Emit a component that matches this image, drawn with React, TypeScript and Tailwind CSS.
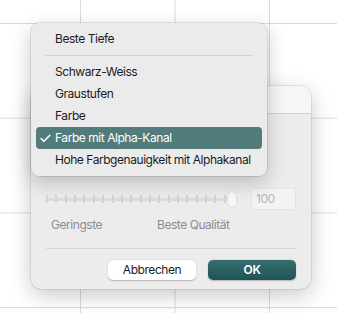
import { Check } from "lucide-react"

const items = [
  "Schwarz-Weiss",
  "Graustufen",
  "Farbe",
  "Farbe mit Alpha-Kanal",
  "Hohe Farbgenauigkeit mit Alphakanal",
]

const Slider = () => {
  const ticks = Array.from({ length: 20 })
  return (
    <div className="relative h-[14px] w-[190px]">
      <div className="absolute left-0 right-[6px] top-[6px] h-[3px] rounded-full bg-[#dcdcdc]" />
      <div className="absolute left-0 right-[10px] top-[3px] flex justify-between">
        {ticks.map((_, i) => (
          <div key={i} className="h-[8px] w-[2px] bg-[#d4d4d4]" />
        ))}
      </div>
      <div className="absolute right-0 top-0 h-[15px] w-[8px] rounded-full bg-[#f7f7f7] shadow-[0_0_0_0.5px_#cfcfcf]" />
    </div>
  )
}

const App = () => {
  return (
    <div
      className="relative h-[313px] w-[337px] overflow-hidden bg-white bg-[linear-gradient(to_right,#dadada_1px,transparent_1px),linear-gradient(to_bottom,#dadada_1px,transparent_1px)] bg-[size:94.5px_94.7px] bg-[position:80px_23px] text-[12px] tracking-[-0.45px] text-[#1c1c1c]"
      style={{ fontFamily: "Inter, 'Liberation Sans', sans-serif" }}
    >
      {/* dialog */}
      <div className="absolute left-[31px] top-[86px] flex h-[203px] w-[280px] flex-col overflow-hidden rounded-[10px] bg-[#ececec] shadow-[0_6px_22px_rgba(0,0,0,0.22),0_0_0_0.5px_rgba(0,0,0,0.15)]">
        <div className="h-[28px] border-b border-[#d2d2d2] bg-[#f6f6f6]" />
        <div className="flex flex-1 flex-col px-[15px]">
          <div className="mt-[75px] flex items-center justify-between pr-[1px]">
            <Slider />
            <div className="flex h-[20px] w-[43px] items-center bg-[#f3f3f3] pl-[4px] text-[#b5b5b5] shadow-[0_0_0_0.5px_#dedede]">100</div>
          </div>
          <div className="mt-[7px] flex text-[#8d8d8d]">
            <span className="ml-[5px] w-[106px]">Geringste</span>
            <span>Beste Qualität</span>
          </div>
          <div className="mt-[14px] h-px bg-[#d6d6d6]" />
          <div className="mt-[11px] flex justify-end gap-[12px]">
            <button className="h-[20px] w-[88px] rounded-[5px] bg-white text-[#1c1c1c] shadow-[0_0.5px_1.5px_rgba(0,0,0,0.25)]">
              Abbrechen
            </button>
            <button className="h-[20px] w-[88px] rounded-[5px] bg-[linear-gradient(to_bottom,#356f6e,#1f5453)] font-semibold text-white shadow-[0_0.5px_1.5px_rgba(0,0,0,0.25)]">
              OK
            </button>
          </div>
        </div>
      </div>

      {/* popup menu */}
      <div className="absolute left-[31px] top-[23px] w-[236px] rounded-[8px] bg-[#ebebeb] py-[5px] shadow-[0_6px_20px_rgba(0,0,0,0.22),0_0_0_0.5px_rgba(0,0,0,0.18)]">
        <div className="flex h-[22px] items-center pl-[24px]">Beste Tiefe</div>
        <div className="flex h-[11px] items-center px-[14px]">
          <div className="h-px w-full bg-[#d3d3d3]" />
        </div>
        {items.map((t) => {
          const sel = t === "Farbe mit Alpha-Kanal"
          return (
            <div
              key={t}
              className={
                sel
                  ? "relative mx-[5px] flex h-[22px] items-center whitespace-nowrap rounded-[4px] bg-[#527c7b] pl-[19px] text-white"
                  : "mx-[5px] flex h-[22px] items-center whitespace-nowrap pl-[19px]"
              }
            >
              {sel && <Check className="absolute left-[3px] top-[5px]" size={13} strokeWidth={3} />}
              {t}
            </div>
          )
        })}
      </div>
    </div>
  )
}

export default App
